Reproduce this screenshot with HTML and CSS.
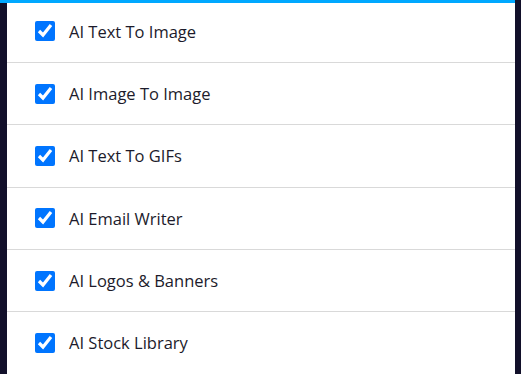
FILE: index.html
```html
<!DOCTYPE html>
<html lang="en">
<head>
    <meta charset="UTF-8">
    <title>AI Tools</title>
    <link rel="stylesheet" href="styles.css">
</head>
<body>
    <div class="top-bar"></div>
    <div class="panel">
        <ul class="tool-list">
            <li class="tool-item"><label><input type="checkbox" checked> AI Text To Image</label></li>
            <li class="tool-item"><label><input type="checkbox" checked> AI Image To Image</label></li>
            <li class="tool-item"><label><input type="checkbox" checked> AI Text To GIFs</label></li>
            <li class="tool-item"><label><input type="checkbox" checked> AI Email Writer</label></li>
            <li class="tool-item"><label><input type="checkbox" checked> AI Logos &amp; Banners</label></li>
            <li class="tool-item"><label><input type="checkbox" checked> AI Stock Library</label></li>
        </ul>
    </div>
</body>
</html>
```

FILE: styles.css
```css
body {
    margin: 0;
    background-color: #12102a; /* dark page behind the panel */
    font-family: "Open Sans", Arial, sans-serif;
    overflow: hidden;
}

/* thin blue strip along the top edge */
.top-bar {
    position: absolute;
    top: 0;
    left: 0;
    width: 515px;
    height: 3px;
    background-color: #00a8ff;
}

.panel {
    margin: 0 6px 0 7px;
    padding-top: 0.67px;
    background-color: #ffffff;
    height: 374px;
    box-sizing: border-box;
}

.tool-list {
    list-style: none;
    margin: 0;
    padding: 0;
}

.tool-item {
    height: 61.33px;
    border-bottom: 1px solid #d9d9d9;
    display: flex;
    align-items: center;
    padding-left: 28px;
}

.tool-item label {
    display: flex;
    align-items: center;
    gap: 14px;
    font-size: 16.5px;
    color: #1c1b2b;
    cursor: pointer;
}

.tool-item input[type="checkbox"] {
    width: 20px;
    height: 20px;
    margin: 0;
    accent-color: #0075ff;
}
```
